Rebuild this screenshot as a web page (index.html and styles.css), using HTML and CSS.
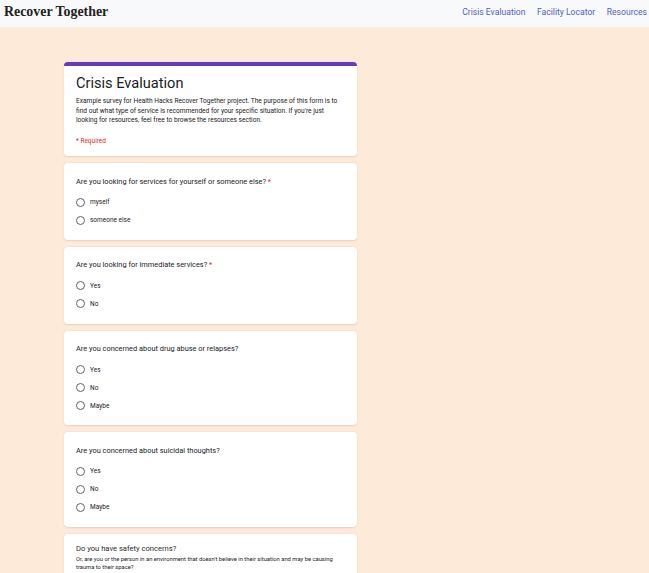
FILE: index.html
```html
<!DOCTYPE html>
<html>
<head>
<meta charset="utf-8">
<title>Recover Together</title>
<link rel="stylesheet" href="styles.css">
</head>
<body>
<header class="topbar">
  <div class="brand">Recover Together</div>
  <nav class="nav">
    <a href="#">Crisis Evaluation</a>
    <a href="#">Facility Locator</a>
    <a href="#">Resources</a>
  </nav>
</header>
<main class="page">
  <div class="form">
    <section class="card intro">
      <h1 class="title">Crisis Evaluation</h1>
      <p class="desc">Example survey for Health Hacks Recover Together project. The purpose of this form is to find out what type of service is recommended for your specific situation. If you're just looking for resources, feel free to browse the resources section.</p>
      <p class="required">* Required</p>
    </section>

    <section class="card">
      <div class="q">Are you looking for services for yourself or someone else? <span class="star">*</span></div>
      <div class="opts">
        <div class="opt"><span class="radio"></span>myself</div>
        <div class="opt"><span class="radio"></span>someone else</div>
      </div>
    </section>

    <section class="card">
      <div class="q">Are you looking for immediate services? <span class="star">*</span></div>
      <div class="opts">
        <div class="opt"><span class="radio"></span>Yes</div>
        <div class="opt"><span class="radio"></span>No</div>
      </div>
    </section>

    <section class="card">
      <div class="q">Are you concerned about drug abuse or relapses?</div>
      <div class="opts">
        <div class="opt"><span class="radio"></span>Yes</div>
        <div class="opt"><span class="radio"></span>No</div>
        <div class="opt"><span class="radio"></span>Maybe</div>
      </div>
    </section>

    <section class="card">
      <div class="q">Are you concerned about suicidal thoughts?</div>
      <div class="opts">
        <div class="opt"><span class="radio"></span>Yes</div>
        <div class="opt"><span class="radio"></span>No</div>
        <div class="opt"><span class="radio"></span>Maybe</div>
      </div>
    </section>

    <section class="card last">
      <div class="q big">Do you have safety concerns?</div>
      <div class="qdesc">Or, are you or the person in an environment that doesn't believe in their situation and may be causing trauma to their space?</div>
    </section>
  </div>
</main>
</body>
</html>
```

FILE: styles.css
```css
html, body {
  margin: 0;
  padding: 0;
}
body {
  background: #fdead9;
  font-family: Roboto, "Noto Sans", sans-serif;
  color: #202124;
  height: 573px;
  overflow: hidden;
}
.topbar {
  height: 27px;
  box-sizing: border-box;
  background: #f8f9fb;
  display: flex;
  align-items: center;
  justify-content: space-between;
  padding: 0 2px 3px 4px;
}
.brand {
  font-family: "Liberation Serif", "DejaVu Serif", serif;
  font-weight: bold;
  font-size: 13.9px;
  color: #1f1f1f;
}
.nav {
  display: flex;
  gap: 11.5px;
}
.nav a {
  font-size: 8.6px;
  color: #4e5fc4;
  text-decoration: none;
}
.page {
  padding: 35px 0 0 64px;
}
.form {
  width: 293px;
  display: flex;
  flex-direction: column;
  gap: 7px;
}
.card {
  background: #fff;
  border-radius: 4px;
  box-shadow: 0 0.5px 1.5px rgba(200, 160, 130, 0.35);
  padding: 13.5px 12px 10.75px;
}
.intro {
  border-top: 4px solid #673ab7;
  padding: 7px 12px 10.5px;
}
.title {
  margin: 0;
  font-weight: 400;
  font-size: 14.6px;
  line-height: 20px;
  color: #202124;
}
.desc {
  margin: 4px 0 0;
  font-size: 6.6px;
  line-height: 9.5px;
  color: #202124;
}
.required {
  margin: 11px 0 0;
  font-size: 6.5px;
  line-height: 9px;
  color: #d93025;
}
.q {
  font-size: 7.4px;
  line-height: 9px;
  color: #202124;
}
.star {
  color: #d93025;
}
.opts {
  margin-top: 7.5px;
  display: flex;
  flex-direction: column;
}
.opt {
  height: 18px;
  display: flex;
  align-items: center;
  gap: 5px;
  font-size: 6.5px;
  color: #202124;
}
.radio {
  width: 9px;
  height: 9px;
  box-sizing: border-box;
  border: 1.3px solid #5f6368;
  border-radius: 50%;
}
.last {
  padding-top: 10px;
}
.big {
  font-size: 7.6px;
  line-height: 10px;
  color: #2a2b2e;
}
.qdesc {
  margin-top: 1px;
  font-size: 5.8px;
  line-height: 8px;
  color: #202124;
}
```
